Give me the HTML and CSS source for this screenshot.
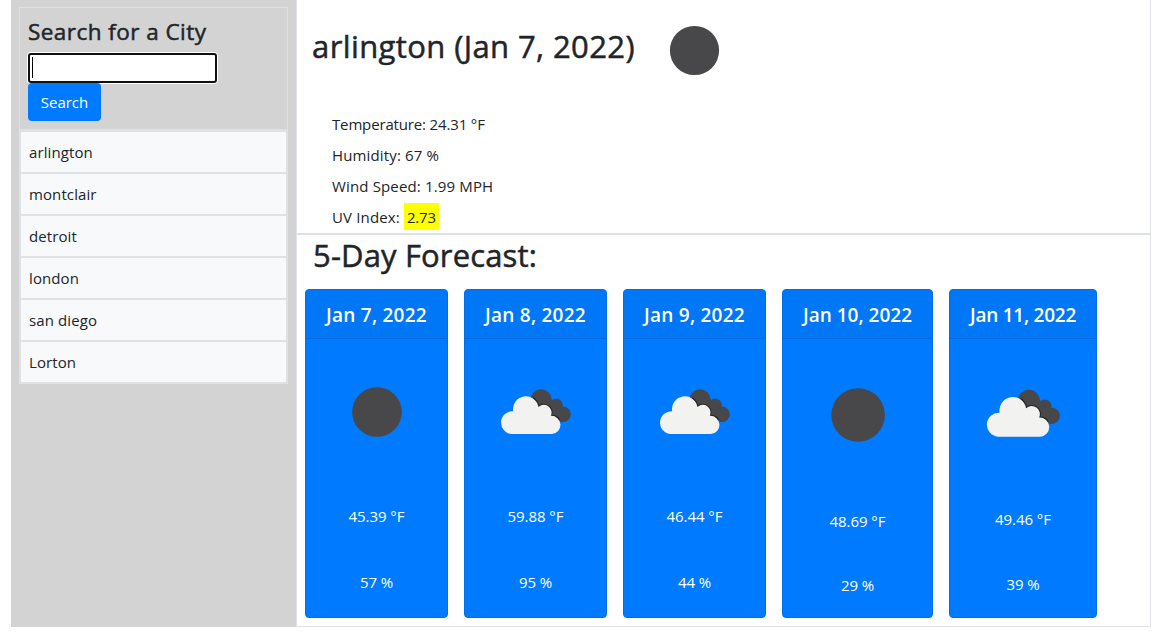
FILE: index.html
```html
<!DOCTYPE html>
<html lang="en">
<head>
<meta charset="utf-8">
<title>Weather Dashboard</title>
<link rel="stylesheet" href="styles.css">
</head>
<body>
<svg width="0" height="0" class="defs">
  <symbol id="moon" viewBox="0 0 100 100"><circle cx="50.5" cy="50.5" r="24.6" fill="#48484a"/></symbol>
  <symbol id="clouds" viewBox="0.5 -0.3 100 100">
    <g fill="#48484a"><circle cx="56" cy="38" r="10.3"/><circle cx="71" cy="43.3" r="6.4"/><circle cx="77.8" cy="52.4" r="7.6"/><path d="M50 40L65 36L76 48L78 60L70 60L52 52Z"/></g>
    <path d="M48 36.3A12.6 12.6 0 0 1 53.4 45.2A7.7 7.7 0 0 1 65.7 54A9 9 0 0 1 74 58" fill="none" stroke="#222224" stroke-width="2"/>
    <path d="M27 72A11.3 11.3 0 0 1 28.4 49.4A12.6 12.6 0 1 1 53.4 45.2A7.7 7.7 0 0 1 65.7 54A9 9 0 0 1 66.7 72Z" fill="#f2f2f0"/>
  </symbol>
</svg>
<div class="container">
  <aside class="sidebar">
    <div class="panel">
      <form class="search">
        <h4 class="search-title">Search for a City</h4>
        <div class="field"><span class="caret"></span></div>
        <button class="btn" type="button">Search</button>
      </form>
      <ul class="cities">
        <li>arlington</li><li>montclair</li><li>detroit</li><li>london</li><li>san diego</li><li>Lorton</li>
      </ul>
    </div>
  </aside>
  <main class="main">
    <section class="current">
      <div class="headline"><h2 class="place">arlington (Jan 7, 2022)</h2><svg class="now-icon"><use href="#moon"/></svg></div>
      <ul class="stats">
        <li class="temperature">Temperature: 24.31 °F</li>
        <li>Humidity: 67 %</li>
        <li>Wind Speed: 1.99 MPH</li>
        <li>UV Index:<span class="uv">2.73</span></li>
      </ul>
    </section>
    <section class="forecast">
      <h2 class="forecast-title">5-Day Forecast:</h2>
      <div class="cards">
        <article class="card"><h5>Jan 7, 2022</h5><div class="body"><svg><use href="#moon"/></svg><p>45.39 °F</p><p>57 %</p></div></article>
        <article class="card"><h5>Jan 8, 2022</h5><div class="body"><svg><use href="#clouds"/></svg><p>59.88 °F</p><p>95 %</p></div></article>
        <article class="card"><h5>Jan 9, 2022</h5><div class="body"><svg><use href="#clouds"/></svg><p>46.44 °F</p><p>44 %</p></div></article>
        <article class="card wide"><h5>Jan 10, 2022</h5><div class="body"><svg><use href="#moon"/></svg><p>48.69 °F</p><p>29 %</p></div></article>
        <article class="card mid"><h5>Jan 11, 2022</h5><div class="body"><svg><use href="#clouds"/></svg><p>49.46 °F</p><p>39 %</p></div></article>
      </div>
    </section>
  </main>
</div>
</body>
</html>
```
FILE: styles.css
```css
* { box-sizing: border-box; }
body { margin: 0; background: #fff; color: #212529; font: 400 15px/24px "Open Sans", "Noto Sans", sans-serif; letter-spacing: -0.05px; overflow: hidden; }
h2, h4, h5, p, ul { margin: 0; padding: 0; font-weight: 400; }
h2, h4 { -webkit-text-stroke: 0.5px #212529; }
ul { list-style: none; }
.defs { display: block; position: absolute; }
.container { width: 1140px; height: 627px; margin-left: 11px; display: flex; }
.sidebar { width: 285px; background: #d3d3d3; padding: 7px 8px 0; }
.panel { width: 269px; border: 1px solid #dee2e6; }
.search { height: 121px; padding: 8px 8px 0; }
.search-title { font-size: 22.5px; line-height: 32px; letter-spacing: 0.45px; white-space: nowrap; }
.field { width: 189px; height: 30px; margin-top: 5px; background: #fff; border: 2px solid #101010; border-radius: 3px; box-shadow: 0 0 0 1px #fff; padding: 2px; }
.caret { display: block; width: 1px; height: 21px; background: #000; }
.btn { display: block; position: relative; width: 73px; height: 38px; border: 0; border-radius: 4px; background: #007bff; color: #fff; font: inherit; letter-spacing: 0; padding: 0; }
.cities { border-top: 1px solid #dee2e6; letter-spacing: 0.1px; }
.cities li { height: 42px; padding: 8px; background: #f8f9fa; border: 1px solid #dee2e6; }
.cities li:first-child { height: 43px; border-top-width: 2px; }
.main { width: 855px; border: 1px solid #dee2e6; border-top: 0; }
.current { height: 235px; border-bottom: 2px solid #dee2e6; }
.headline { display: flex; height: 100px; padding-left: 15px; }
.place { width: 332px; font-size: 31px; line-height: 38px; margin-top: 27px; white-space: nowrap; letter-spacing: 0.4px; }
.now-icon { width: 100px; height: 100px; }
.stats { padding: 8px 0 0 35px; letter-spacing: 0.15px; }
.stats .temperature { letter-spacing: -0.15px; }
.stats li { height: 31px; padding-top: 4px; display: flex; }
.uv { height: 27px; margin: -2px 0 0 4px; padding: 2px 3px; background: #ff0; letter-spacing: -0.15px; }
.forecast { padding: 0 8px; }
.forecast-title { font-size: 31px; line-height: 38px; padding: 1px 0 0 8px; letter-spacing: 0.15px; height: 54px; }
.cards { display: flex; gap: 16px; }
.card { width: 143px; height: 329px; background: #007bff; border: 1px solid #006ee5; border-radius: 4px; color: #fff; text-align: center; display: flex; flex-direction: column; }
.wide { width: 151px; }
.mid { width: 148px; }
.card h5 { height: 49px; background: #0077f7; border-bottom: 1px solid #006bde; border-radius: 3px 3px 0 0; font-size: 19px; font-weight: 600; line-height: 50px; white-space: nowrap; letter-spacing: 0.25px; }
.wide h5 { letter-spacing: 0; }
.mid h5 { letter-spacing: -0.25px; }
.body { flex: 1; padding: 1px 20px 2.5px; display: flex; flex-direction: column; justify-content: space-around; }
.wide .body { padding: 1px 20px 0; }
.mid .body { padding: 0 20px 1px; }
.body svg { width: 100%; aspect-ratio: 1; flex: none; }
```
